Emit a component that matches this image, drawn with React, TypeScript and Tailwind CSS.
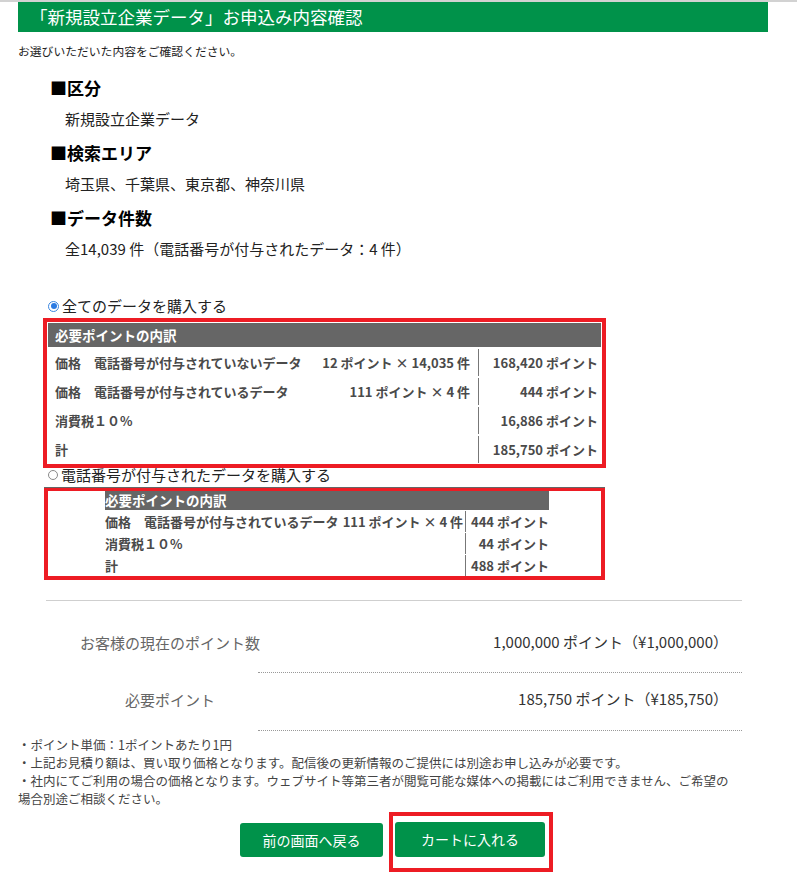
import React from 'react';

const FONT = "font-['Noto_Sans_CJK_JP','Noto_Sans',sans-serif]";

interface Row {
  label: string;
  qty?: string;
  value: string;
}

const ALL_ROWS: Row[] = [
  { label: '価格　電話番号が付与されていないデータ', qty: '12 ポイント × 14,035 件', value: '168,420 ポイント' },
  { label: '価格　電話番号が付与されているデータ', qty: '111 ポイント × 4 件', value: '444 ポイント' },
  { label: '消費税１０%', value: '16,886 ポイント' },
  { label: '計', value: '185,750 ポイント' },
];

const PHONE_ROWS: Row[] = [
  { label: '価格　電話番号が付与されているデータ', qty: '111 ポイント × 4 件', value: '444 ポイント' },
  { label: '消費税１０%', value: '44 ポイント' },
  { label: '計', value: '488 ポイント' },
];

function Section({ title, children }: { title: string; children: React.ReactNode }) {
  return (
    <div>
      <h3 className="mt-[11px] ml-[50px] text-[17px] leading-[24px] font-bold text-black">■{title}</h3>
      <p className="mt-[8px] ml-[65px] text-[15px] leading-[22px] text-[#222]">{children}</p>
    </div>
  );
}

function Radio({ checked, label }: { checked: boolean; label: string }) {
  return (
    <div className="flex items-center ml-[48px] text-[15px] text-[#222]">
      {checked ? (
        <span className="w-[11px] h-[11px] rounded-full border border-[#3a86e0] bg-white flex items-center justify-center">
          <span className="w-[6px] h-[6px] rounded-full bg-[#2a7ae2]" />
        </span>
      ) : (
        <span className="w-[10px] h-[10px] rounded-full border border-[#8a8a8a] bg-white" />
      )}
      <span className="ml-[3px]">{label}</span>
    </div>
  );
}

export default function App() {
  return (
    <div className={`w-[797px] min-h-[878px] bg-white ${FONT} text-[#222]`}>
      <div className="h-[2px] bg-[#d2d2d2]" />

      {/* Title bar */}
      <div className="ml-[18px] w-[750px] h-[30px] bg-[#00924a] text-white text-[17.5px] leading-[30px] pl-[12px] whitespace-nowrap">
        「新規設立企業データ」お申込み内容確認
      </div>

      <p className="mt-[10px] ml-[18px] text-[11.8px] leading-[18px] text-[#222]">
        お選びいただいた内容をご確認ください。
      </p>

      <div className="pt-[5px]">
        <Section title="区分">新規設立企業データ</Section>
        <Section title="検索エリア">埼玉県、千葉県、東京都、神奈川県</Section>
        <Section title="データ件数">全14,039 件（電話番号が付与されたデータ：4 件）</Section>
      </div>

      {/* Option 1 */}
      <div className="mt-[35px] h-[22px] flex items-center">
        <Radio checked label="全てのデータを購入する" />
      </div>
      <div className="mt-[1px] ml-[43px] w-[563px] border-4 border-[#ed1c24] p-[1px]">
        <div className="h-[24px] bg-[#666666] text-white text-[13.5px] font-bold leading-[24px] pl-[7px]">
          必要ポイントの内訳
        </div>
        {ALL_ROWS.map((r) => (
          <div key={r.label} className="mt-[2px] h-[27px] flex items-center text-[13px] font-bold text-[#4a4a4a]">
            <div className="flex-1 flex justify-between pl-[7px] pr-[8px] whitespace-nowrap">
              <span>{r.label}</span>
              <span>{r.qty}</span>
            </div>
            <div className="w-[123px] h-full flex items-center justify-end border-l border-[#777] pr-[3px] whitespace-nowrap">
              {r.value}
            </div>
          </div>
        ))}
      </div>

      {/* Option 2 */}
      <div className="h-[19px] leading-[14px]">
        <Radio checked={false} label="電話番号が付与されたデータを購入する" />
      </div>
      <div className="ml-[44px] w-[561px] h-[1px] bg-[#666]" />
      <div className="ml-[44px] w-[561px] border-4 border-t-[3px] border-[#ed1c24] pl-[57px]">
        <div className="w-[444px]">
          <div className="h-[19px] bg-[#666666] text-white text-[13.5px] font-bold leading-[19px]">
            必要ポイントの内訳
          </div>
          {PHONE_ROWS.map((r) => (
            <div key={r.label} className="mt-[1px] h-[21px] flex items-center text-[13px] font-bold text-[#4a4a4a]">
              <div className="w-[360px] pr-[2px] whitespace-nowrap">
                {r.label}
                {r.qty ? <span className="ml-[4px]">{r.qty}</span> : null}
              </div>
              <div className="w-[84px] h-full flex items-center justify-end border-l border-[#777] whitespace-nowrap">
                {r.value}
              </div>
            </div>
          ))}
        </div>
      </div>

      {/* Points summary */}
      <div className="mt-[20px] ml-[46px] w-[696px] border-t border-[#cfcfcf]">
        <div className="flex h-[72px] pt-[12px]">
          <div className="w-[212px] pl-[36px] flex items-center justify-center text-[15px] text-[#666] whitespace-nowrap">
            お客様の現在のポイント数
          </div>
          <div className="flex-1 flex items-center justify-end pr-[14px] text-[15px] text-[#333] border-b border-dotted border-[#999] whitespace-nowrap">
            1,000,000 ポイント（¥1,000,000）
          </div>
        </div>
        <div className="flex h-[58px]">
          <div className="w-[212px] pl-[36px] pb-[4px] flex items-center justify-center text-[15px] text-[#666] whitespace-nowrap">
            必要ポイント
          </div>
          <div className="flex-1 flex items-center justify-end pr-[14px] pb-[4px] text-[15px] text-[#333] border-b border-dotted border-[#999] whitespace-nowrap">
            185,750 ポイント（¥185,750）
          </div>
        </div>
      </div>

      {/* Notes */}
      <div className="mt-[5px] ml-[18px] text-[12.5px] leading-[18px] text-[#444] whitespace-nowrap">
        <p>・ポイント単価：1ポイントあたり1円</p>
        <p>・上記お見積り額は、買い取り価格となります。配信後の更新情報のご提供には別途お申し込みが必要です。</p>
        <p>
          ・社内にてご利用の場合の価格となります。ウェブサイト等第三者が閲覧可能な媒体への掲載にはご利用できません、ご希望の
          <br />
          場合別途ご相談ください。
        </p>
      </div>

      {/* Buttons */}
      <div className="mt-[4px] ml-[240px] flex items-start gap-[6px]">
        <button className="mt-[11px] w-[143px] h-[34px] rounded-[3px] bg-[#00924a] text-white text-[14px]">
          前の画面へ戻る
        </button>
        <div className="border-4 border-[#ed1c24] pl-[2px] pt-[6px] pr-[4px] pb-[11px]">
          <button className="w-[150px] h-[35px] rounded-[3px] bg-[#00924a] text-white text-[14px]">
            カートに入れる
          </button>
        </div>
      </div>
    </div>
  );
}
